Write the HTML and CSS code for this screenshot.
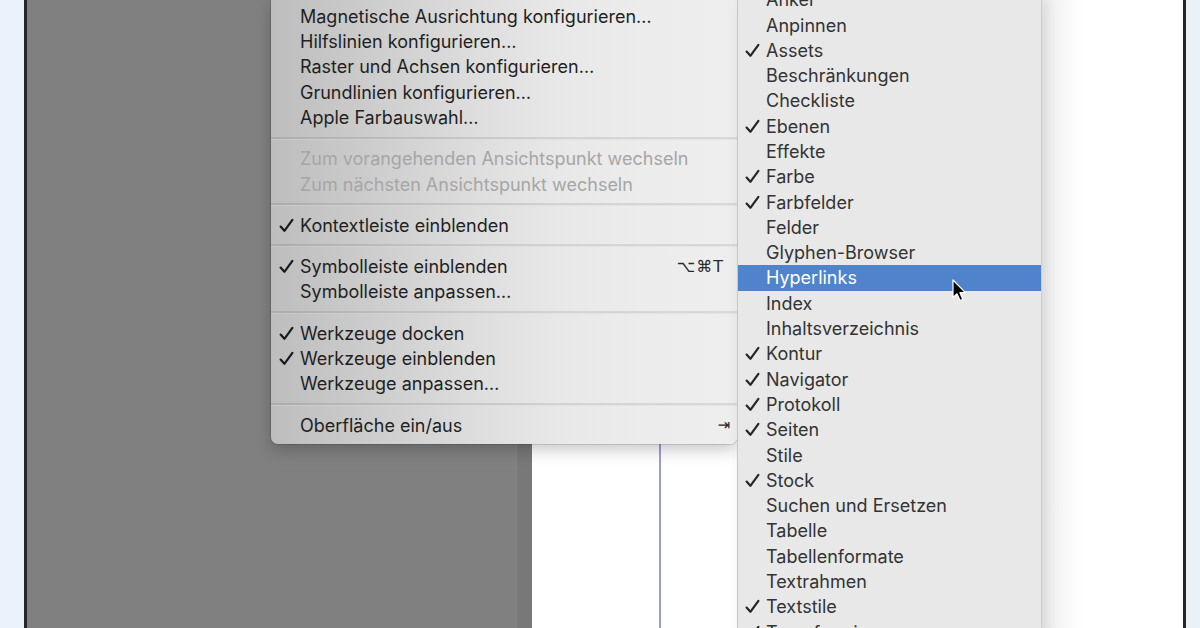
FILE: index.html
```html
<!DOCTYPE html>
<html lang="de">
<head>
<meta charset="utf-8">
<title>Menü</title>
<link rel="stylesheet" href="styles.css">
</head>
<body>
<div class="screen">
  <div class="side side-left"></div>
  <div class="frame"></div>
  <div class="pasteboard"></div>
  <div class="strip"></div>
  <div class="canvas"><div class="guide"></div><div class="subshadow"></div></div>
  <div class="frame"></div>
  <div class="side side-right"></div>
</div>

<div class="menu main">
  <div class="item"><span class="chk"></span><span class="lbl">Magnetische Ausrichtung konfigurieren…</span></div>
  <div class="item"><span class="chk"></span><span class="lbl">Hilfslinien konfigurieren…</span></div>
  <div class="item"><span class="chk"></span><span class="lbl">Raster und Achsen konfigurieren…</span></div>
  <div class="item"><span class="chk"></span><span class="lbl">Grundlinien konfigurieren…</span></div>
  <div class="item"><span class="chk"></span><span class="lbl">Apple Farbauswahl…</span></div>
  <div class="sep"></div>
  <div class="item disabled"><span class="chk"></span><span class="lbl">Zum vorangehenden Ansichtspunkt wechseln</span></div>
  <div class="item disabled"><span class="chk"></span><span class="lbl">Zum nächsten Ansichtspunkt wechseln</span></div>
  <div class="sep"></div>
  <div class="item"><span class="chk"><svg viewBox="0 0 15 15"><path d="M1.6 8.6 L5.4 12.8 L13.4 1.8"/></svg></span><span class="lbl">Kontextleiste einblenden</span></div>
  <div class="sep"></div>
  <div class="item"><span class="chk"><svg viewBox="0 0 15 15"><path d="M1.6 8.6 L5.4 12.8 L13.4 1.8"/></svg></span><span class="lbl">Symbolleiste einblenden</span><span class="key">⌥⌘T</span></div>
  <div class="item"><span class="chk"></span><span class="lbl">Symbolleiste anpassen…</span></div>
  <div class="sep"></div>
  <div class="item"><span class="chk"><svg viewBox="0 0 15 15"><path d="M1.6 8.6 L5.4 12.8 L13.4 1.8"/></svg></span><span class="lbl">Werkzeuge docken</span></div>
  <div class="item"><span class="chk"><svg viewBox="0 0 15 15"><path d="M1.6 8.6 L5.4 12.8 L13.4 1.8"/></svg></span><span class="lbl">Werkzeuge einblenden</span></div>
  <div class="item"><span class="chk"></span><span class="lbl">Werkzeuge anpassen…</span></div>
  <div class="sep"></div>
  <div class="item"><span class="chk"></span><span class="lbl">Oberfläche ein/aus</span><span class="key tab">⇥</span></div>
</div>

<div class="menu sub">
  <div class="list">
    <div class="item"><span class="chk"></span><span class="lbl">Anker</span></div>
    <div class="item"><span class="chk"></span><span class="lbl">Anpinnen</span></div>
    <div class="item"><span class="chk"><svg viewBox="0 0 15 15"><path d="M1.6 8.6 L5.4 12.8 L13.4 1.8"/></svg></span><span class="lbl">Assets</span></div>
    <div class="item"><span class="chk"></span><span class="lbl">Beschränkungen</span></div>
    <div class="item"><span class="chk"></span><span class="lbl">Checkliste</span></div>
    <div class="item"><span class="chk"><svg viewBox="0 0 15 15"><path d="M1.6 8.6 L5.4 12.8 L13.4 1.8"/></svg></span><span class="lbl">Ebenen</span></div>
    <div class="item"><span class="chk"></span><span class="lbl">Effekte</span></div>
    <div class="item"><span class="chk"><svg viewBox="0 0 15 15"><path d="M1.6 8.6 L5.4 12.8 L13.4 1.8"/></svg></span><span class="lbl">Farbe</span></div>
    <div class="item"><span class="chk"><svg viewBox="0 0 15 15"><path d="M1.6 8.6 L5.4 12.8 L13.4 1.8"/></svg></span><span class="lbl">Farbfelder</span></div>
    <div class="item"><span class="chk"></span><span class="lbl">Felder</span></div>
    <div class="item"><span class="chk"></span><span class="lbl">Glyphen-Browser</span></div>
    <div class="item active"><span class="chk"></span><span class="lbl">Hyperlinks</span></div>
    <div class="item"><span class="chk"></span><span class="lbl">Index</span></div>
    <div class="item"><span class="chk"></span><span class="lbl">Inhaltsverzeichnis</span></div>
    <div class="item"><span class="chk"><svg viewBox="0 0 15 15"><path d="M1.6 8.6 L5.4 12.8 L13.4 1.8"/></svg></span><span class="lbl">Kontur</span></div>
    <div class="item"><span class="chk"><svg viewBox="0 0 15 15"><path d="M1.6 8.6 L5.4 12.8 L13.4 1.8"/></svg></span><span class="lbl">Navigator</span></div>
    <div class="item"><span class="chk"><svg viewBox="0 0 15 15"><path d="M1.6 8.6 L5.4 12.8 L13.4 1.8"/></svg></span><span class="lbl">Protokoll</span></div>
    <div class="item"><span class="chk"><svg viewBox="0 0 15 15"><path d="M1.6 8.6 L5.4 12.8 L13.4 1.8"/></svg></span><span class="lbl">Seiten</span></div>
    <div class="item"><span class="chk"></span><span class="lbl">Stile</span></div>
    <div class="item"><span class="chk"><svg viewBox="0 0 15 15"><path d="M1.6 8.6 L5.4 12.8 L13.4 1.8"/></svg></span><span class="lbl">Stock</span></div>
    <div class="item"><span class="chk"></span><span class="lbl">Suchen und Ersetzen</span></div>
    <div class="item"><span class="chk"></span><span class="lbl">Tabelle</span></div>
    <div class="item"><span class="chk"></span><span class="lbl">Tabellenformate</span></div>
    <div class="item"><span class="chk"></span><span class="lbl">Textrahmen</span></div>
    <div class="item"><span class="chk"><svg viewBox="0 0 15 15"><path d="M1.6 8.6 L5.4 12.8 L13.4 1.8"/></svg></span><span class="lbl">Textstile</span></div>
    <div class="item"><span class="chk"><svg viewBox="0 0 15 15"><path d="M1.6 8.6 L5.4 12.8 L13.4 1.8"/></svg></span><span class="lbl">Transformieren</span></div>
  </div>
</div>

<svg class="cursor" width="16" height="24" viewBox="0 0 16 24">
  <path d="M1 1 L1 18.5 L5 14.8 L8 21.5 L10.8 20.3 L7.9 13.7 L13.2 13.4 Z" fill="#000" stroke="#fff" stroke-width="1.2" stroke-linejoin="round"/>
</svg>
</body>
</html>
```

FILE: styles.css
```css
* { box-sizing: border-box; }
html, body {
  margin: 0;
  padding: 0;
  width: 1200px;
  height: 628px;
  overflow: hidden;
  background: #eaf2fb;
  font-family: "Inter", "Liberation Sans", "DejaVu Sans", sans-serif;
}
.screen {
  display: flex;
  width: 1200px;
  height: 628px;
}
.side-left { width: 24px; background: #eaf2fb; }
.side-right { flex: 1; background: #eaf1f7; }
.frame { width: 3px; background: #262626; }
.pasteboard { width: 489px; background: #808080; }
.strip { width: 16px; background: #787878; border-left: 1px solid #858585; }
.canvas {
  width: 651px;
  background: #ffffff;
  position: relative;
}
.guide {
  position: absolute;
  left: 127px;
  top: 0;
  bottom: 0;
  width: 2px;
  background: #9c9cdc;
}
.subshadow {
  position: absolute;
  left: 510px;
  top: 0;
  bottom: 0;
  width: 40px;
  background: linear-gradient(90deg, rgba(0,0,0,0.07), rgba(0,0,0,0));
}

.menu {
  position: absolute;
  top: 0;
  font-size: 18px;
  letter-spacing: 0;
}
.menu.main {
  left: 271px;
  width: 466px;
  padding: 3.6px 0 6px;
  border-radius: 0 0 7px 7px;
  background: linear-gradient(90deg, #bdbdbd 0%, #cdcdcd 22%, #dedede 45%, #e8e8e8 62%, #ececec 80%, #eeeeee 100%);
  box-shadow: 0 6px 16px rgba(0,0,0,0.22), 0 0 0 1px rgba(0,0,0,0.12);
  color: #1f1f1f;
  z-index: 2;
}
.menu.sub {
  left: 737px;
  width: 305px;
  height: 640px;
  background: #e8e8e8;
  border-left: 1px solid #c6c6c6;
  border-right: 1px solid #cdcdcd;
  box-shadow: 4px 0 14px rgba(0,0,0,0.10);
  color: #333333;
  overflow: hidden;
  z-index: 3;
}
.sub .list { margin-top: -12.95px; }

.item {
  display: flex;
  align-items: center;
  height: 25.3px;
  white-space: nowrap;
}
.main .item { padding: 0 13px 0 8px; }
.sub .item { padding: 0 10px 0 7px; }
.chk {
  width: 21px;
  height: 15px;
  flex: none;
  display: flex;
  align-items: center;
}
.chk svg {
  width: 15px;
  height: 15px;
  fill: none;
  stroke: #1a1a1a;
  stroke-width: 2.2;
  stroke-linecap: round;
  stroke-linejoin: round;
}
.sub .chk svg { stroke: #262626; }
.lbl { flex: 1; }
.key {
  flex: none;
  font-family: "DejaVu Sans", sans-serif;
  font-size: 16px;
  letter-spacing: 1px;
  color: #2a2a2a;
}
.key.tab { margin-right: -7px; font-size: 15px; }
.item.disabled { color: #a6a6a6; }
.item.active {
  background: #4f84cc;
  color: #ffffff;
}
.sep {
  height: 16px;
  display: flex;
  align-items: center;
}
.sep::before {
  content: "";
  display: block;
  width: 100%;
  height: 2px;
  background: rgba(0,0,0,0.09);
  border-bottom: 1px solid rgba(255,255,255,0.35);
}
.cursor {
  position: absolute;
  left: 952px;
  top: 279px;
  z-index: 5;
}
```
